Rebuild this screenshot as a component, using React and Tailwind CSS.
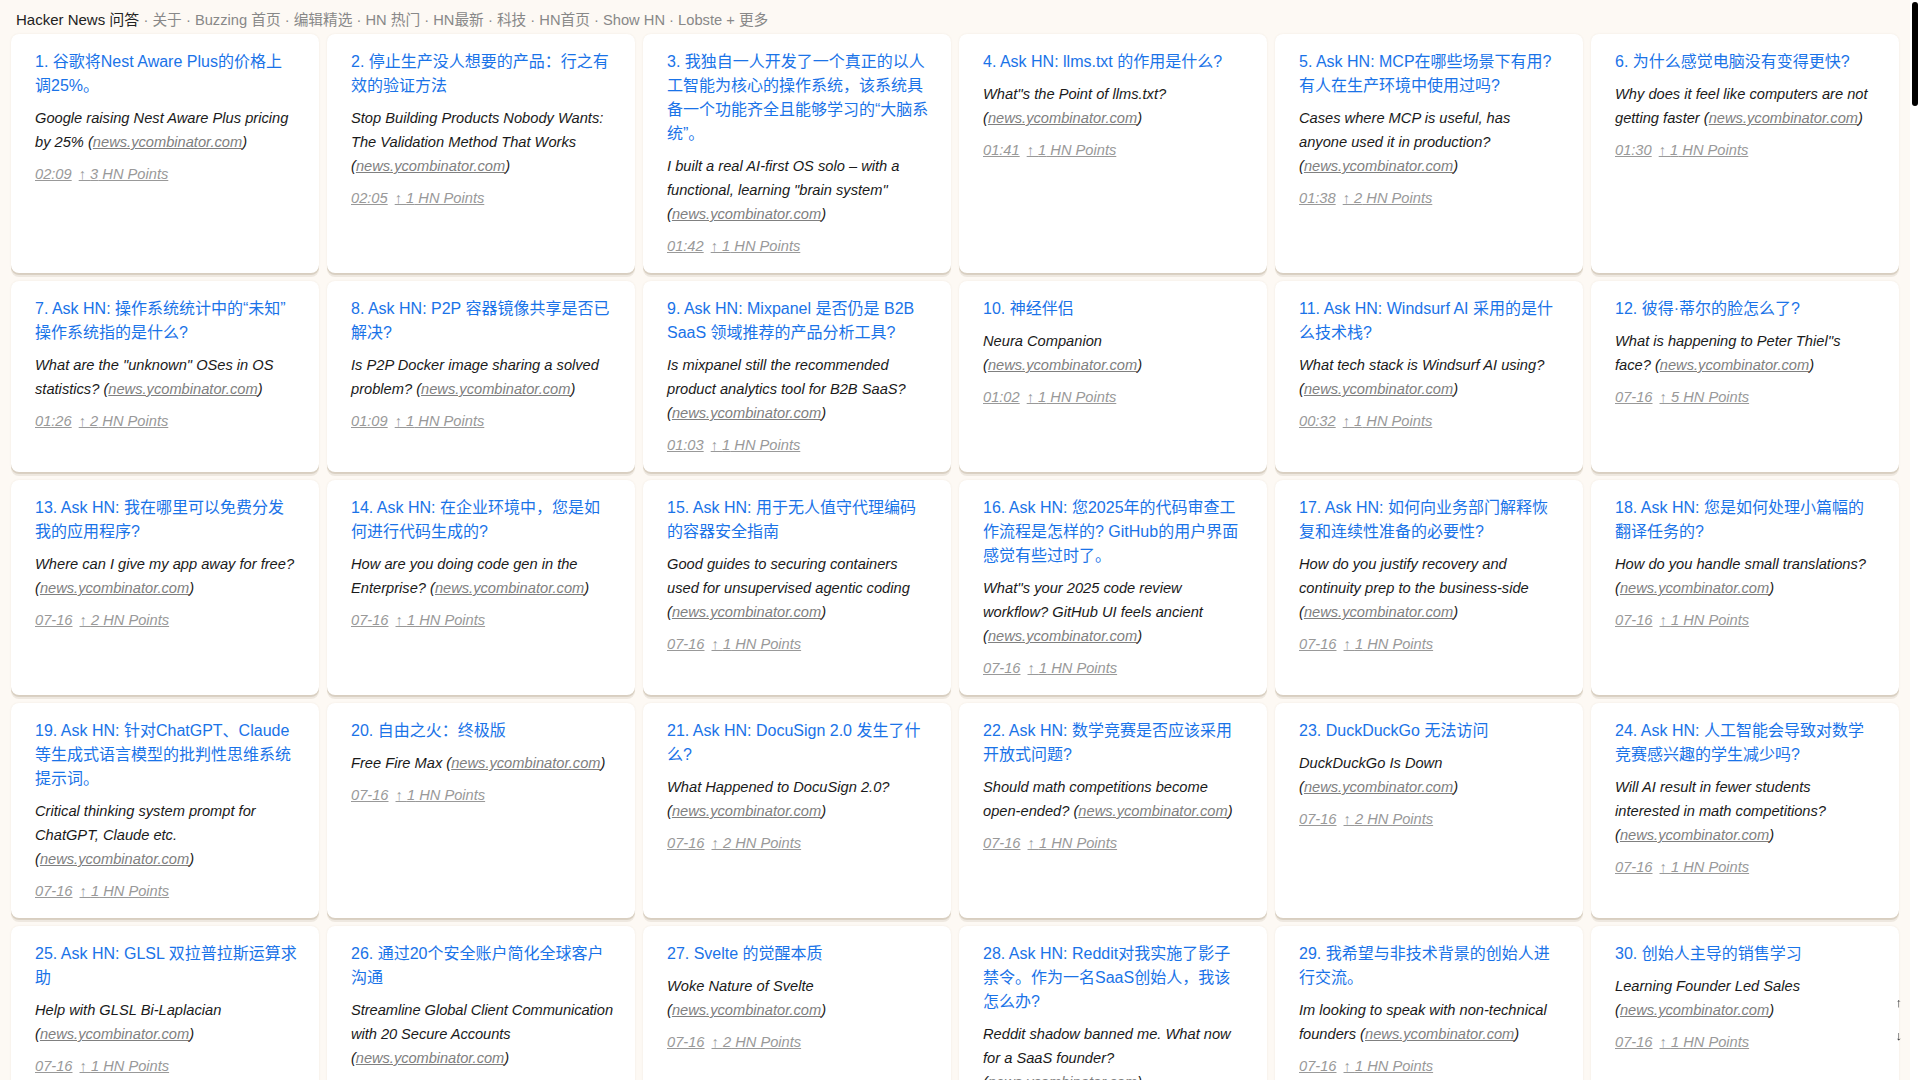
import React from "react";

const items = [
  ["谷歌将Nest Aware Plus的价格上调25%。", "Google raising Nest Aware Plus pricing by 25%", "02:09", 3],
  ["停止生产没人想要的产品：行之有效的验证方法", "Stop Building Products Nobody Wants: The Validation Method That Works", "02:05", 1],
  ["我独自一人开发了一个真正的以人工智能为核心的操作系统，该系统具备一个功能齐全且能够学习的“大脑系统”。", "I built a real AI-first OS solo – with a functional, learning \"brain system\"", "01:42", 1],
  ["Ask HN: llms.txt 的作用是什么?", "What''s the Point of llms.txt?", "01:41", 1],
  ["Ask HN: MCP在哪些场景下有用?有人在生产环境中使用过吗?", "Cases where MCP is useful, has anyone used it in production?", "01:38", 2],
  ["为什么感觉电脑没有变得更快?", "Why does it feel like computers are not getting faster", "01:30", 1],
  ["Ask HN: 操作系统统计中的“未知”\u200B操作系统指的是什么?", "What are the \"unknown\" OSes in OS statistics?", "01:26", 2],
  ["Ask HN: P2P 容器镜像共享是否已解决?", "Is P2P Docker image sharing a solved problem?", "01:09", 1],
  ["Ask HN: Mixpanel 是否仍是 B2B SaaS 领域推荐的产品分析工具?", "Is mixpanel still the recommended product analytics tool for B2B SaaS?", "01:03", 1],
  ["神经伴侣", "Neura Companion", "01:02", 1],
  ["Ask HN: Windsurf AI 采用的是什么技术栈?", "What tech stack is Windsurf AI using?", "00:32", 1],
  ["彼得·蒂尔的脸怎么了?", "What is happening to Peter Thiel''s face?", "07-16", 5],
  ["Ask HN: 我在哪里可以免费分发我的应用程序?", "Where can I give my app away for free?", "07-16", 2],
  ["Ask HN: 在企业环境中，您是如何进行代码生成的?", "How are you doing code gen in the Enterprise?", "07-16", 1],
  ["Ask HN: 用于无人值守代理编码的容器安全指南", "Good guides to securing containers used for unsupervised agentic coding", "07-16", 1],
  ["Ask HN: 您2025年的代码审查工作流程是怎样的? GitHub的用户界面感觉有些过时了。", "What''s your 2025 code review workflow? GitHub UI feels ancient", "07-16", 1],
  ["Ask HN: 如何向业务部门解释恢复和连续性准备的必要性?", "How do you justify recovery and continuity prep to the business-side", "07-16", 1],
  ["Ask HN: 您是如何处理小篇幅的翻译任务的?", "How do you handle small translations?", "07-16", 1],
  ["Ask HN: 针对ChatGPT、Claude等生成式语言模型的批判性思维系统提示词。", "Critical thinking system prompt for ChatGPT, Claude etc.", "07-16", 1],
  ["自由之火：终极版", "Free Fire Max", "07-16", 1],
  ["Ask HN: DocuSign 2.0 发生了什么?", "What Happened to DocuSign 2.0?", "07-16", 2],
  ["Ask HN: 数学竞赛是否应该采用开放式问题?", "Should math competitions become open-ended?", "07-16", 1],
  ["DuckDuckGo 无法访问", "DuckDuckGo Is Down", "07-16", 2],
  ["Ask HN: 人工智能会导致对数学竞赛感兴趣的学生减少吗?", "Will AI result in fewer students interested in math competitions?", "07-16", 1],
  ["Ask HN: GLSL 双拉普拉斯运算求助", "Help with GLSL Bi-Laplacian", "07-16", 1],
  ["通过20个安全账户简化全球客户沟通", "Streamline Global Client Communication with 20 Secure Accounts", "07-16", 1, "tracking-[-0.05px]"],
  ["Svelte 的觉醒本质", "Woke Nature of Svelte", "07-16", 2],
  ["Ask HN: Reddit对我实施了影子禁令。作为一名SaaS创始人，我该怎么办?", "Reddit shadow banned me. What now for a SaaS founder?", "07-16", 1],
  ["我希望与非技术背景的创始人进行交流。", "Im looking to speak with non-technical founders", "07-16", 1],
  ["创始人主导的销售学习", "Learning Founder Led Sales", "07-16", 1],
];

const navLinks = ["关于", "Buzzing 首页", "编辑精选", "HN 热门", "HN最新", "科技", "HN首页", "Show HN", "Lobste + 更多"];

function Card({ n, title, desc, time, pts, tight }) {
  return (
    <article className="bg-white rounded-lg pl-6 pr-[21.2px] pt-4 pb-[15px] shadow-[0_0_2px_rgba(150,120,80,0.12),0_2px_0_#dbd2c5,0_4px_0_#eee8e0]">
      <a href="#" className="block text-[16px] leading-6 text-[#1a73e8]">
        {n}. {title}
      </a>
      <p className={"mt-2 italic text-[14.667px] leading-6 text-[#1a1a1a] " + (tight ? "tracking-[-0.05px]" : "")}>
        {desc} (
        <a href="#" className="underline text-[#808080]">news.ycombinator.com</a>)
      </p>
      <div className="mt-2 italic text-[14.667px] leading-6 text-[#999999] flex gap-[7px]">
        <a href="#" className="underline">{time}</a>
        <a href="#" className="underline">↑ {pts} HN Points</a>
      </div>
    </article>
  );
}

export default function App() {
  return (
    <div className="flex h-screen bg-[#fdf9f4] font-['Liberation_Sans','Noto_Sans_CJK_SC',sans-serif]">
      <div className="flex-1 min-w-0 overflow-y-auto [scrollbar-width:none]">
        <div className="min-h-[10800px]">
          <header className="px-4 pt-2 text-[14.7px] leading-6 text-[#888888]">
            <span className="text-[15px] text-[#222222]">Hacker News 问答</span>
            {navLinks.map((l) => (
              <span key={l}>
                {" · "}
                <a href="#">{l}</a>
              </span>
            ))}
          </header>
          <main className="grid grid-cols-6 gap-2 px-[11px] pt-[2px] content-start">
            {items.map((it, i) => (
              <Card key={i} n={i + 1} title={it[0]} desc={it[1]} time={it[2]} pts={it[3]} tight={!!it[4]} />
            ))}
          </main>
        </div>
      </div>
      <aside className="w-[10px] shrink-0 bg-white pt-[2px] pl-[2px]">
        <div className="w-[6px] h-[104px] rounded-full bg-black" />
      </aside>
      <div className="fixed right-[18px] bottom-[36px] flex flex-col gap-[17px] text-[13px] leading-4 text-[#333333]">
        <a href="#">↑</a>
        <a href="#">↓</a>
      </div>
    </div>
  );
}
